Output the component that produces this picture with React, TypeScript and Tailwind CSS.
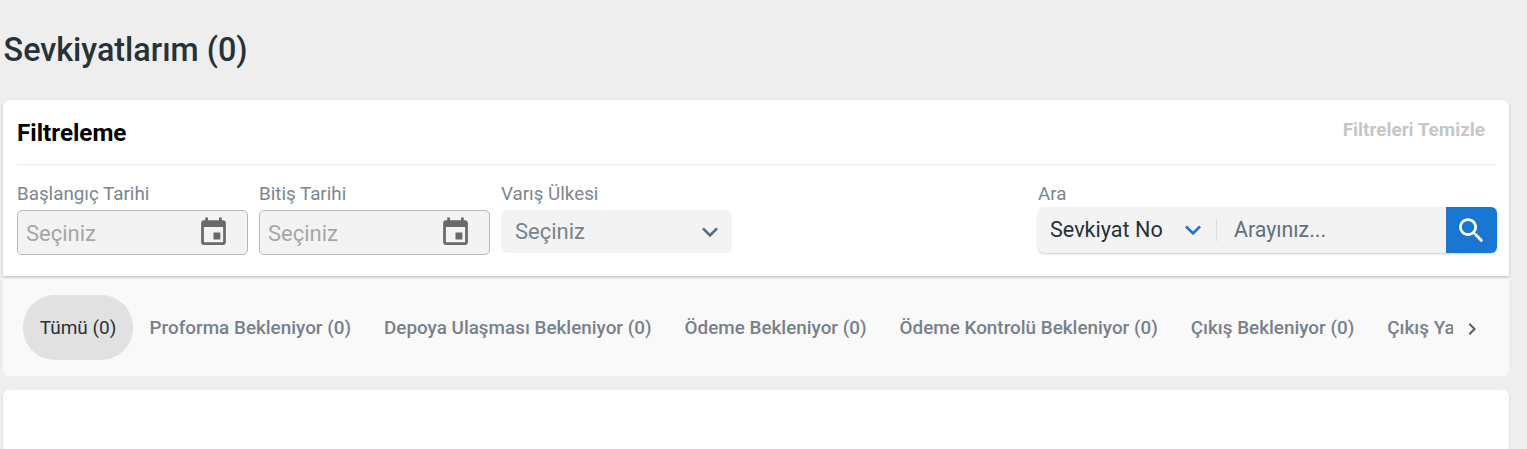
const EVENT = "M17 12h-5v5h5v-5zM16 1v2H8V1H6v2H5c-1.11 0-1.99.9-1.99 2L3 19c0 1.1.89 2 2 2h14c1.1 0 2-.9 2-2V5c0-1.1-.9-2-2-2h-1V1h-2zm3 18H5V8h14v11z";
const DOWN = "M16.59 8.59L12 13.17 7.41 8.59 6 10l6 6 6-6z";
const RIGHT = "M10 6L8.59 7.41 13.17 12l-4.58 4.59L10 18l6-6z";
const SEARCH = "M15.5 14h-.79l-.28-.27C15.41 12.59 16 11.11 16 9.5 16 5.91 13.09 3 9.5 3S3 5.91 3 9.5 5.91 16 9.5 16c1.61 0 3.09-.59 4.23-1.57l.27.28v.79l5 4.99L20.49 19l-4.99-5zm-6 0C7.01 14 5 11.99 5 9.5S7.01 5 9.5 5 14 7.01 14 9.5 11.99 14 9.5 14z";

function Icon({ d, className }: { d: string; className: string }) {
  return (
    <svg viewBox="0 0 24 24" fill="currentColor" className={className}>
      <path d={d} />
    </svg>
  );
}

function DateField({ label }: { label: string }) {
  return (
    <div className="w-[231px] shrink-0">
      <div className="h-[24px] text-[18.8px] leading-[24px] text-[#7c868f]">{label}</div>
      <div className="mt-[4px] flex h-[45px] items-center justify-between rounded-[5px] border border-[#b8b8b8] bg-[#f3f3f3] pl-[8px] pr-[17px]">
        <span className="mt-[2px] text-[22px] text-[#a6a6a6]">Seçiniz</span>
        <Icon d={EVENT} className="h-[33px] w-[33px] text-[#696969]" />
      </div>
    </div>
  );
}

const tabs = [
  "Proforma Bekleniyor (0)",
  "Depoya Ulaşması Bekleniyor (0)",
  "Ödeme Bekleniyor (0)",
  "Ödeme Kontrolü Bekleniyor (0)",
  "Çıkış Bekleniyor (0)",
  "Çıkış Yapıldı (0)",
];

export default function App() {
  return (
    <div className="h-[449px] overflow-hidden bg-[#eeeeee] pl-[3px] pr-[18px] font-['Roboto',sans-serif]">
      <h1 className="flex h-[100px] items-center pl-[0.6px] text-[32.3px] font-medium text-[#263238]">Sevkiyatlarım (0)</h1>

      <section className="h-[176px] rounded-t-[6px] bg-white pl-[14px] pr-[12px] shadow-[0_1px_3px_rgba(0,0,0,0.2)]">
        <div className="mr-px flex h-[65px] items-center justify-between border-b border-[#ececec] pr-[11px] pt-px">
          <h2 className="mt-[2px] text-[24.2px] font-bold text-black">Filtreleme</h2>
          <button className="mb-[5px] text-[18.9px] font-bold text-[#c6c6c6]">Filtreleri Temizle</button>
        </div>
        <div className="mt-[17px] flex">
          <div className="flex gap-[11px]">
            <DateField label="Başlangıç Tarihi" />
            <DateField label="Bitiş Tarihi" />
            <div className="w-[231px] shrink-0">
              <div className="h-[24px] text-[18.8px] leading-[24px] text-[#7c868f]">Varış Ülkesi</div>
              <div className="mt-[4px] flex h-[43px] items-center justify-between rounded-[6px] bg-[#f3f3f3] pl-[14px] pr-[6px]">
                <span className="text-[22px] text-[#78848d]">Seçiniz</span>
                <Icon d={DOWN} className="h-[32px] w-[32px] text-[#546e7a]" />
              </div>
            </div>
          </div>
          <div className="ml-auto w-[459px]">
            <div className="h-[24px] text-[18.8px] leading-[24px] text-[#7c868f]">Ara</div>
            <div className="mt-px flex h-[46px] items-stretch overflow-hidden rounded-[6px] bg-[#f3f3f3] shadow-[0_1px_2px_rgba(0,0,0,0.2)]">
              <div className="flex w-[178px] shrink-0 items-center justify-between pl-[12px] pr-[7px]">
                <span className="text-[21.6px] text-[#263238]">Sevkiyat No</span>
                <Icon d={DOWN} className="h-[32px] w-[32px] text-[#1976d2]" />
              </div>
              <div className="my-auto h-[22px] w-px bg-[#dcdcdc]" />
              <div className="flex flex-1 items-center pl-[17px] text-[21.33px] text-[#607080]">Arayınız...</div>
              <button className="flex w-[51px] items-center justify-center bg-[#1976d2] text-white">
                <Icon d={SEARCH} className="h-[33px] w-[33px]" />
              </button>
            </div>
          </div>
        </div>
      </section>

      <nav className="mt-[3px] flex h-[97px] items-center rounded-b-[6px] bg-[#f9f9f9] pl-[20px] pr-[20px]">
        <div className="flex w-[1430px] items-center overflow-hidden">
          <div className="flex h-[65px] w-[110px] shrink-0 items-center justify-center rounded-[32px] bg-[#e1e1e1] pt-px text-[19px] text-[#263238]">Tümü (0)</div>
          {tabs.map((t) => (
            <div key={t} className="flex h-[65px] shrink-0 items-center whitespace-nowrap px-[16.5px] pt-[2px] text-[18.88px] font-medium text-[#78808c]">{t}</div>
          ))}
        </div>
        <Icon d={RIGHT} className="ml-[7px] mt-[3px] h-[24px] w-[24px] text-[#545f66]" />
      </nav>

      <section className="mt-[14px] h-[200px] rounded-[6px] bg-white shadow-[0_1px_2px_rgba(0,0,0,0.15)]" />
    </div>
  );
}
